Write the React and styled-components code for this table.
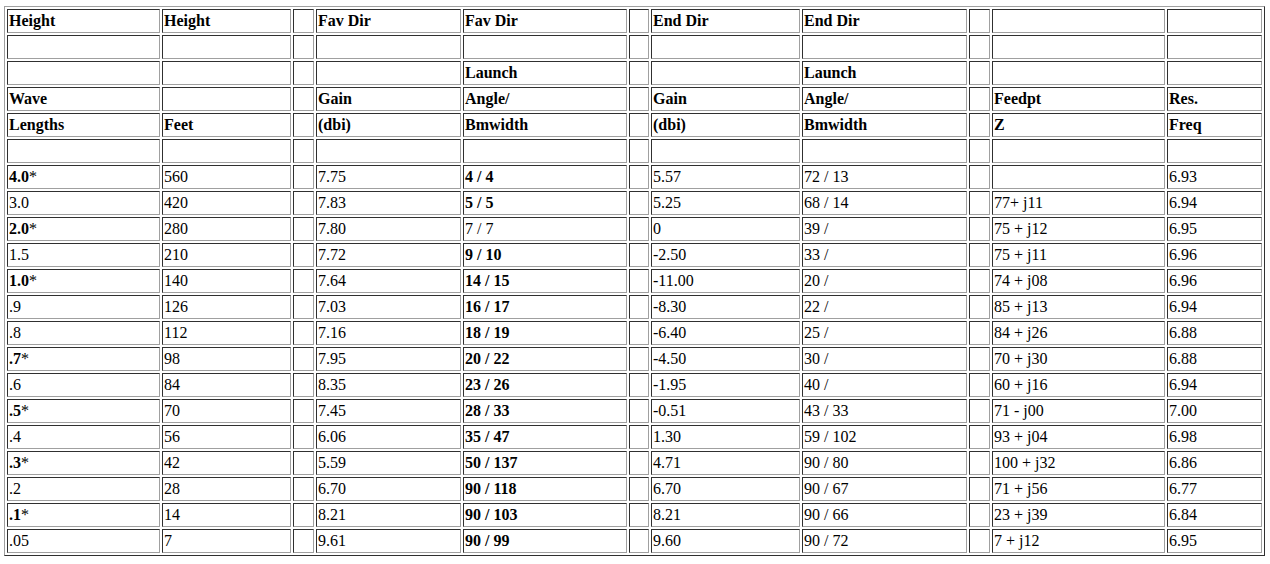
import React from "react";
import styled, { createGlobalStyle } from "styled-components";

const Global = createGlobalStyle`
  html, body { margin: 0; padding: 0; background: #ffffff; }
  body { font-family: "Liberation Serif", "Times New Roman", serif; color: #000; }
`;

const Page = styled.div`
  padding: 6px 0 0 4px;
`;

const Table = styled.table`
  table-layout: fixed;
  width: 1261px;
  border-collapse: separate;
  border-spacing: 2px;
  border-style: solid;
  border-width: 1px;
  border-color: #a0a0a0 #303030 #303030 #a0a0a0;
  font-family: "Liberation Serif", "Times New Roman", serif;
  font-size: 16px;
`;

const Col = styled.col`
  width: ${(p) => p.$w}px;
`;

const Cell = styled.td`
  box-sizing: border-box;
  height: 24px;
  padding: 1px;
  line-height: 20px;
  border-style: solid;
  border-width: 1px;
  border-color: #303030 #a0a0a0 #a0a0a0 #303030;
  white-space: nowrap;
  overflow: hidden;
  vertical-align: middle;
  font-weight: ${(p) => (p.$bold ? 700 : 400)};
`;

const Star = styled.span`
  font-weight: 400;
`;

const widths = [153, 129, 21, 145, 164, 20, 149, 165, 21, 173, 95];

const header = [
  ["Height", "Height", "", "Fav Dir", "Fav Dir", "", "End Dir", "End Dir", "", "", ""],
  ["", "", "", "", "", "", "", "", "", "", ""],
  ["", "", "", "", "Launch", "", "", "Launch", "", "", ""],
  ["Wave", "", "", "Gain", "Angle/", "", "Gain", "Angle/", "", "Feedpt", "Res."],
  ["Lengths", "Feet", "", "(dbi)", "Bmwidth", "", "(dbi)", "Bmwidth", "", "Z", "Freq"],
  ["", "", "", "", "", "", "", "", "", "", ""],
];

const data = [
  ["4.0*", "560", "7.75", "4 / 4", "5.57", "72 / 13", "", "6.93"],
  ["3.0", "420", "7.83", "5 / 5", "5.25", "68 / 14", "77+ j11", "6.94"],
  ["2.0*", "280", "7.80", "7 / 7", "0", "39 /", "75 + j12", "6.95"],
  ["1.5", "210", "7.72", "9 / 10", "-2.50", "33 /", "75 + j11", "6.96"],
  ["1.0*", "140", "7.64", "14 / 15", "-11.00", "20 /", "74 + j08", "6.96"],
  [".9", "126", "7.03", "16 / 17", "-8.30", "22 /", "85 + j13", "6.94"],
  [".8", "112", "7.16", "18 / 19", "-6.40", "25 /", "84 + j26", "6.88"],
  [".7*", "98", "7.95", "20 / 22", "-4.50", "30 /", "70 + j30", "6.88"],
  [".6", "84", "8.35", "23 / 26", "-1.95", "40 /", "60 + j16", "6.94"],
  [".5*", "70", "7.45", "28 / 33", "-0.51", "43 / 33", "71 - j00", "7.00"],
  [".4", "56", "6.06", "35 / 47", "1.30", "59 / 102", "93 + j04", "6.98"],
  [".3*", "42", "5.59", "50 / 137", "4.71", "90 / 80", "100 + j32", "6.86"],
  [".2", "28", "6.70", "90 / 118", "6.70", "90 / 67", "71 + j56", "6.77"],
  [".1*", "14", "8.21", "90 / 103", "8.21", "90 / 66", "23 + j39", "6.84"],
  [".05", "7", "9.61", "90 / 99", "9.60", "90 / 72", "7 + j12", "6.95"],
];

function LengthCell({ value }) {
  const starred = value.endsWith("*");
  if (!starred) return <Cell>{value}</Cell>;
  return (
    <Cell $bold>
      {value.slice(0, -1)}
      <Star>*</Star>
    </Cell>
  );
}

export default function App() {
  return (
    <>
      <Global />
      <Page>
        <Table>
          <colgroup>
            {widths.map((w, i) => (
              <Col key={i} $w={w} />
            ))}
          </colgroup>
          <tbody>
            {header.map((row, r) => (
              <tr key={"h" + r}>
                {row.map((c, i) => (
                  <Cell key={i} $bold>
                    {c}
                  </Cell>
                ))}
              </tr>
            ))}
            {data.map((d, r) => (
              <tr key={"d" + r}>
                <LengthCell value={d[0]} />
                <Cell>{d[1]}</Cell>
                <Cell />
                <Cell>{d[2]}</Cell>
                <Cell $bold={d[3] !== "7 / 7"}>{d[3]}</Cell>
                <Cell />
                <Cell>{d[4]}</Cell>
                <Cell>{d[5]}</Cell>
                <Cell />
                <Cell>{d[6]}</Cell>
                <Cell>{d[7]}</Cell>
              </tr>
            ))}
          </tbody>
        </Table>
      </Page>
    </>
  );
}
